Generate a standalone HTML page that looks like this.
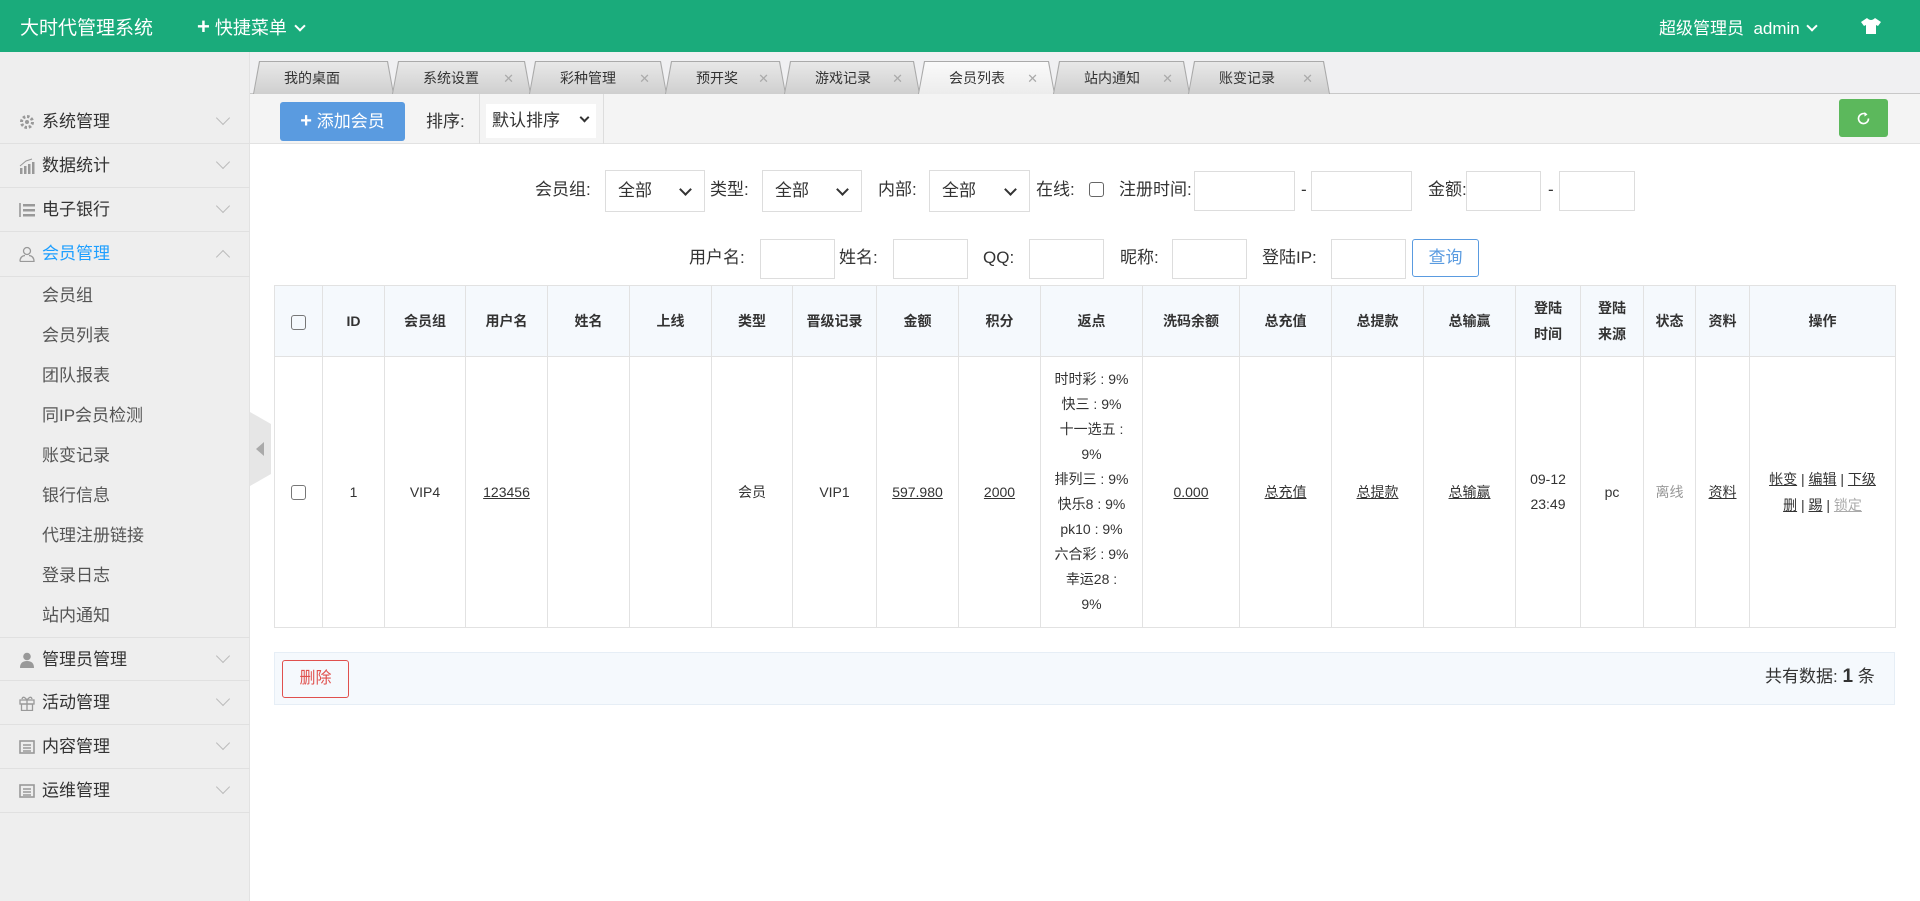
<!DOCTYPE html>
<html><head><meta charset="utf-8"><style>
*{box-sizing:border-box;margin:0;padding:0}
body{width:1920px;height:901px;overflow:hidden;background:#fff;font-family:"Liberation Sans","Noto Sans CJK SC",sans-serif;font-size:15px;color:#333;position:relative}
.a{position:absolute}
#hd{left:0;top:0;width:1920px;height:52px;background:#1aab7b;color:#fff}
#sb{left:0;top:52px;width:250px;height:849px;background:#eee;border-right:1px solid #e2e2e2}
.mi{position:absolute;left:0;width:250px;height:44px;border-bottom:1px solid #e0e0e0;font-size:17px;color:#333;line-height:44px;padding-left:42px}
.mi .ic{position:absolute;left:19px;top:14px;width:16px;height:16px}
.mi .ch{position:absolute;right:22px;top:13px;width:10px;height:10px;border-right:1.5px solid #bbb;border-bottom:1.5px solid #bbb;transform:rotate(45deg)}
.mi .ch.up{transform:rotate(-135deg);top:20px}
.si{position:absolute;left:42px;font-size:17px;color:#555}
#tabs{left:250px;top:52px;width:1670px;height:42px;background:#f0f0f2;border-bottom:1px solid #c8c8c8}
.tab{position:absolute;top:9px;height:33px;background:#aaa;clip-path:polygon(6px 0,calc(100% - 6px) 0,100% 100%,0 100%);font-size:14px;color:#333;line-height:33px}
.tab i{position:absolute;left:1px;right:1px;top:1px;bottom:0;background:linear-gradient(#e8e8e8,#cfcfcf);clip-path:polygon(6px 0,calc(100% - 6px) 0,100% 100%,0 100%);font-style:normal;padding-left:30px}
.tab.on i{background:linear-gradient(#fafafa,#ececec)}
.tab .x{position:absolute;right:16px;color:#aaa;font-size:13px}
#tb{left:250px;top:94px;width:1670px;height:50px;background:#f4f4f4;border-bottom:1px solid #e2e2e2}
.sel{position:absolute;height:42px;border:1px solid #ddd;background:#fff;font-size:17px;line-height:40px;padding-left:12px}
.sel:after{content:"";position:absolute;right:14px;top:14px;width:7px;height:7px;border-right:2px solid #333;border-bottom:2px solid #333;transform:rotate(45deg)}
.inp{position:absolute;height:40px;border:1px solid #ddd;background:#fff}
.lb{position:absolute;font-size:17px;color:#333;line-height:40px}
table{border-collapse:collapse;position:absolute;left:274px;top:285px;width:1621px;table-layout:fixed}
td,th{border:1px solid #e2e2e2;text-align:center;font-size:14px;color:#333}
th{background:#f5f9fd;height:71px;font-weight:bold;line-height:26px}
td{height:271px;line-height:25px}
u{text-decoration:underline}
.cb{display:inline-block;width:15px;height:15px;border:1px solid #777;border-radius:3px;vertical-align:middle}
</style></head><body>
<div id="hd" class="a">
 <div class="a" style="left:20px;top:13px;font-size:19px">大时代管理系统</div>
 <div class="a" style="left:197px;top:14px;font-size:18px"><b style="font-size:22px;line-height:18px">+</b> 快捷菜单 <span style="display:inline-block;width:8px;height:8px;border-right:2px solid #fff;border-bottom:2px solid #fff;transform:rotate(45deg);position:relative;top:-4px;margin-left:4px"></span></div>
 <div class="a" style="left:1659px;top:14px;font-size:17px">超级管理员&nbsp; admin <span style="display:inline-block;width:8px;height:8px;border-right:2px solid #fff;border-bottom:2px solid #fff;transform:rotate(45deg);position:relative;top:-4px;margin-left:4px"></span></div>
 <svg class="a" style="left:1860px;top:17px" width="22" height="18" viewBox="0 0 22 18"><path d="M7 1 L1 5 L4 9 L6 8 L6 17 L16 17 L16 8 L18 9 L21 5 L15 1 Q11 5 7 1Z" fill="#fff"/></svg>
</div>
<div id="sb" class="a">
 <div class="mi" style="top:48px"><svg class="ic" viewBox="0 0 16 16"><circle cx="8" cy="8" r="5.5" fill="none" stroke="#999" stroke-width="3" stroke-dasharray="2.5 1.8"/><circle cx="8" cy="8" r="2" fill="#999"/></svg>系统管理<i class="ch"></i></div>
 <div class="mi" style="top:92px"><svg class="ic" viewBox="0 0 16 16"><rect x="1" y="10" width="2.5" height="6" fill="#999"/><rect x="5" y="8" width="2.5" height="8" fill="#999"/><rect x="9" y="6" width="2.5" height="10" fill="#999"/><rect x="13" y="4" width="2.5" height="12" fill="#999"/><path d="M1 8 L7 3 L13 1" stroke="#999" fill="none"/></svg>数据统计<i class="ch"></i></div>
 <div class="mi" style="top:136px"><svg class="ic" viewBox="0 0 16 16"><rect x="0" y="1" width="2" height="14" fill="#aaa"/><rect x="4" y="2" width="12" height="2.5" fill="#999"/><rect x="4" y="7" width="12" height="2.5" fill="#999"/><rect x="4" y="12" width="12" height="2.5" fill="#999"/></svg>电子银行<i class="ch"></i></div>
 <div class="mi" style="top:180px;color:#1e9fff;height:45px"><svg class="ic" viewBox="0 0 16 16"><circle cx="8" cy="5" r="3.5" fill="none" stroke="#999" stroke-width="1.3"/><path d="M1 15.5 Q1 10 6 9.5 M10 9.5 Q15 10 15 15.5 L1 15.5" fill="none" stroke="#999" stroke-width="1.3"/></svg>会员管理<i class="ch up"></i></div>
 <div class="si" style="top:229px">会员组</div>
 <div class="si" style="top:269px">会员列表</div>
 <div class="si" style="top:309px">团队报表</div>
 <div class="si" style="top:349px">同IP会员检测</div>
 <div class="si" style="top:389px">账变记录</div>
 <div class="si" style="top:429px">银行信息</div>
 <div class="si" style="top:469px">代理注册链接</div>
 <div class="si" style="top:509px">登录日志</div>
 <div class="si" style="top:549px">站内通知</div>
 <div class="mi" style="top:585px;border-top:1px solid #e0e0e0"><svg class="ic" viewBox="0 0 16 16"><circle cx="8" cy="4.5" r="3.8" fill="#999"/><path d="M1 16 Q1 9 8 9 Q15 9 15 16Z" fill="#999"/></svg>管理员管理<i class="ch"></i></div>
 <div class="mi" style="top:629px"><svg class="ic" viewBox="0 0 16 16"><rect x="1" y="5" width="14" height="4" fill="none" stroke="#999" stroke-width="1.3"/><rect x="2.5" y="9" width="11" height="6.5" fill="none" stroke="#999" stroke-width="1.3"/><path d="M8 5 V15.5 M8 5 Q4 0 3 4 M8 5 Q12 0 13 4" stroke="#999" fill="none" stroke-width="1.3"/></svg>活动管理<i class="ch"></i></div>
 <div class="mi" style="top:673px"><svg class="ic" viewBox="0 0 16 16"><rect x="1" y="2" width="14" height="12" fill="none" stroke="#999" stroke-width="1.6"/><path d="M4 6H12M4 9H12M4 12H12" stroke="#999" stroke-width="1.4"/></svg>内容管理<i class="ch"></i></div>
 <div class="mi" style="top:717px"><svg class="ic" viewBox="0 0 16 16"><rect x="1" y="2" width="14" height="12" fill="none" stroke="#999" stroke-width="1.6"/><path d="M4 6H12M4 9H12M4 12H12" stroke="#999" stroke-width="1.4"/></svg>运维管理<i class="ch"></i></div>
</div>
<div class="a" style="left:250px;top:412px;width:21px;height:74px;background:#e6e6e6;clip-path:polygon(0 0,100% 12px,100% calc(100% - 12px),0 100%)"></div>
<div class="a" style="left:256px;top:442px;width:0;height:0;border-top:7px solid transparent;border-bottom:7px solid transparent;border-right:8px solid #aaa"></div>
<div id="tabs" class="a">
 <div class="tab" style="left:3px;width:141px"><i>我的桌面</i></div>
 <div class="tab" style="left:142px;width:139px"><i>系统设置<span class="x">✕</span></i></div>
 <div class="tab" style="left:279px;width:138px"><i>彩种管理<span class="x">✕</span></i></div>
 <div class="tab" style="left:415px;width:121px"><i>预开奖<span class="x">✕</span></i></div>
 <div class="tab" style="left:534px;width:136px"><i>游戏记录<span class="x">✕</span></i></div>
 <div class="tab on" style="left:668px;width:137px"><i>会员列表<span class="x">✕</span></i></div>
 <div class="tab" style="left:803px;width:137px"><i>站内通知<span class="x">✕</span></i></div>
 <div class="tab" style="left:938px;width:142px"><i>账变记录<span class="x">✕</span></i></div>
</div>
<div id="tb" class="a"></div>
<div class="a" style="left:280px;top:102px;width:125px;height:39px;background:#5a9be0;border-radius:3px;color:#fff;font-size:17px;line-height:39px;text-align:center"><b style="font-size:20px">+</b> 添加会员</div>
<div class="a" style="left:426px;top:107px;font-size:17px">排序:</div>
<div class="a" style="left:479px;top:94px;width:125px;height:50px;border-left:1px solid #ddd;border-right:1px solid #ddd"></div>
<div class="a" style="left:486px;top:104px;width:110px;height:34px;background:#fff;font-size:17px;line-height:34px;padding-left:6px">默认排序</div>
<div class="a" style="left:581px;top:114px;width:7px;height:7px;border-right:2px solid #333;border-bottom:2px solid #333;transform:rotate(45deg)"></div>
<div class="a" style="left:1839px;top:99px;width:49px;height:38px;background:#5cb85c;border-radius:3px"><svg style="position:absolute;left:17px;top:12px" width="15" height="15" viewBox="0 0 15 15"><path d="M12.5 7.5 A5 5 0 1 1 10 3.2" fill="none" stroke="#fff" stroke-width="1.6"/><path d="M8.5 1 L11.5 3.5 L8.5 5.5" fill="#fff"/></svg></div>

<div class="lb" style="left:535px;top:170px">会员组:</div>
<div class="sel" style="left:605px;top:170px;width:100px">全部</div>
<div class="lb" style="left:710px;top:170px">类型:</div>
<div class="sel" style="left:762px;top:170px;width:100px">全部</div>
<div class="lb" style="left:878px;top:170px">内部:</div>
<div class="sel" style="left:929px;top:170px;width:101px">全部</div>
<div class="lb" style="left:1036px;top:170px">在线:</div>
<div class="a" style="left:1089px;top:182px;width:15px;height:15px;border:1px solid #666;border-radius:3px"></div>
<div class="lb" style="left:1119px;top:170px">注册时间:</div>
<div class="inp" style="left:1194px;top:171px;width:101px"></div>
<div class="lb" style="left:1301px;top:170px">-</div>
<div class="inp" style="left:1311px;top:171px;width:101px"></div>
<div class="lb" style="left:1428px;top:170px">金额:</div>
<div class="inp" style="left:1466px;top:171px;width:75px"></div>
<div class="lb" style="left:1548px;top:170px">-</div>
<div class="inp" style="left:1559px;top:171px;width:76px"></div>

<div class="lb" style="left:689px;top:238px">用户名:</div>
<div class="inp" style="left:760px;top:239px;width:75px"></div>
<div class="lb" style="left:839px;top:238px">姓名:</div>
<div class="inp" style="left:893px;top:239px;width:75px"></div>
<div class="lb" style="left:983px;top:238px">QQ:</div>
<div class="inp" style="left:1029px;top:239px;width:75px"></div>
<div class="lb" style="left:1120px;top:238px">昵称:</div>
<div class="inp" style="left:1172px;top:239px;width:75px"></div>
<div class="lb" style="left:1262px;top:238px">登陆IP:</div>
<div class="inp" style="left:1331px;top:239px;width:75px"></div>
<div class="a" style="left:1412px;top:239px;width:67px;height:38px;border:1px solid #5a9be0;border-radius:3px;color:#5a9be0;font-size:17px;line-height:36px;text-align:center">查询</div>

<table>
<colgroup><col style="width:48px"><col style="width:62px"><col style="width:81px"><col style="width:82px"><col style="width:82px"><col style="width:82px"><col style="width:81px"><col style="width:84px"><col style="width:82px"><col style="width:82px"><col style="width:102px"><col style="width:97px"><col style="width:92px"><col style="width:92px"><col style="width:92px"><col style="width:65px"><col style="width:63px"><col style="width:52px"><col style="width:54px"><col style="width:146px"></colgroup>
<tr><th><span class="cb"></span></th><th>ID</th><th>会员组</th><th>用户名</th><th>姓名</th><th>上线</th><th>类型</th><th>晋级记录</th><th>金额</th><th>积分</th><th>返点</th><th>洗码余额</th><th>总充值</th><th>总提款</th><th>总输赢</th><th>登陆<br>时间</th><th>登陆<br>来源</th><th>状态</th><th>资料</th><th>操作</th></tr>
<tr><td><span class="cb"></span></td><td>1</td><td>VIP4</td><td><u>123456</u></td><td></td><td></td><td>会员</td><td>VIP1</td><td><u>597.980</u></td><td><u>2000</u></td><td>时时彩 : 9%<br>快三 : 9%<br>十一选五 :<br>9%<br>排列三 : 9%<br>快乐8 : 9%<br>pk10 : 9%<br>六合彩 : 9%<br>幸运28 :<br>9%</td><td><u>0.000</u></td><td><u>总充值</u></td><td><u>总提款</u></td><td><u>总输赢</u></td><td>09-12<br>23:49</td><td>pc</td><td style="color:#999">离线</td><td><u>资料</u></td><td style="line-height:26px"><u>帐变</u> | <u>编辑</u> | <u>下级</u><br><u>删</u> | <u>踢</u> | <u style="color:#aaa">锁定</u></td></tr>
</table>
<div class="a" style="left:274px;top:652px;width:1621px;height:53px;background:#f5f9fd;border:1px solid #e6eef6"></div>
<div class="a" style="left:282px;top:660px;width:67px;height:38px;border:1px solid #e0504d;border-radius:3px;color:#e0504d;font-size:16px;line-height:36px;text-align:center">删除</div>
<div class="a" style="left:1765px;top:662px;font-size:17px">共有数据: <b style="font-size:19px">1</b> 条</div>
</body></html>
